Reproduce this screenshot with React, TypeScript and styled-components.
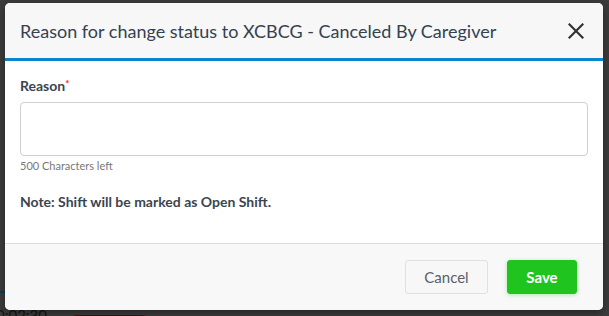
import React from 'react';
import styled, { createGlobalStyle } from 'styled-components';

const GlobalStyle = createGlobalStyle`
  html, body {
    margin: 0;
    padding: 0;
    background: #3c3c3c;
    font-family: Lato, "Open Sans", Arial, sans-serif;
    overflow: hidden;
  }
  * { box-sizing: border-box; }
`;

const Page = styled.div`
  position: relative;
  width: 609px;
  height: 316px;
  background: #3c3c3c;
  overflow: hidden;
`;

const BackRow = styled.div`
  position: absolute;
  left: -4px;
  top: 306px;
  right: 0;
  display: grid;
  grid-template-columns: 72px 88px 112px 137px 115px 1fr;
  align-items: center;
  font-size: 15px;
  color: #141414;
`;

const BackBadge = styled.span`
  display: inline-block;
  background: #520d0d;
  color: #7a2a2a;
  border-radius: 10px;
  padding: 1px 10px;
  font-size: 14px;
`;

const BackRule = styled.div`
  position: absolute;
  left: 0;
  top: 291px;
  width: 6px;
  height: 2px;
  background: #0b3b5c;
`;

const Modal = styled.div`
  position: absolute;
  top: 3px;
  left: 5px;
  width: 598px;
  height: 307px;
  background: #fff;
  border-radius: 5px;
  overflow: hidden;
  display: flex;
  flex-direction: column;
  box-shadow: 0 3px 9px rgba(0, 0, 0, 0.4);
`;

const Header = styled.div`
  height: 58px;
  background: #f7f7f7;
  border-bottom: 3px solid #0a84d0;
  display: flex;
  align-items: center;
  justify-content: space-between;
  padding: 0 17px 0 15px;
`;

const Title = styled.h4`
  margin: 0;
  font-size: 18px;
  font-weight: 400;
  color: #364150;
`;

const CloseButton = styled.button`
  border: none;
  background: transparent;
  padding: 0;
  width: 20px;
  height: 20px;
  display: flex;
  align-items: center;
  justify-content: center;
  cursor: pointer;
`;

const Body = styled.div`
  flex: 1;
  padding: 16px 15px 0 15px;
`;

const Label = styled.label`
  display: block;
  font-size: 14px;
  font-weight: 700;
  color: #3a4551;
  margin-bottom: 8px;
`;

const Required = styled.span`
  color: #e8262b;
  font-size: 10px;
  vertical-align: top;
`;

const TextArea = styled.textarea`
  display: block;
  width: 568px;
  height: 54px;
  margin-top: 1px;
  border: 1px solid #cfcfcf;
  border-radius: 4px;
  resize: none;
  font-family: inherit;
  font-size: 14px;
  outline: none;
`;

const Hint = styled.div`
  font-size: 11px;
  color: #777;
  margin-top: 3px;
`;

const Note = styled.p`
  margin: 21px 0 0;
  font-size: 14px;
  font-weight: 700;
  color: #3a4551;
`;

const Footer = styled.div`
  height: 67px;
  background: #f8f8f8;
  border-top: 1px solid #ddd;
  display: flex;
  align-items: center;
  justify-content: flex-end;
  gap: 19px;
  padding: 0 26px 0 0;
`;

const Button = styled.button<{ $primary?: boolean }>`
  height: 34px;
  width: ${p => (p.$primary ? '70px' : '83px')};
  padding: 0;
  border-radius: 3px;
  font-family: inherit;
  font-size: 15px;
  font-weight: ${p => (p.$primary ? 700 : 400)};
  color: ${p => (p.$primary ? '#fff' : '#5a5f66')};
  background: ${p => (p.$primary ? '#1fc41f' : '#f7f7f7')};
  border: 1px solid ${p => (p.$primary ? '#1fc41f' : '#e0e0e0')};
  box-shadow: ${p => (p.$primary ? '0 1px 4px rgba(31, 196, 31, 0.35)' : 'none')};
  cursor: pointer;
`;

export default function App() {
  return (
    <Page>
      <GlobalStyle />
      <BackRule />
      <BackRow>
        <span>0:02:30 AM</span>
        <span><BackBadge>Clock-Out</BackBadge></span>
        <span>Rochester Office</span>
        <span>0.50hrs</span>
        <span>0.50hrs</span>
        <span>0.00</span>
      </BackRow>
      <Modal>
        <Header>
          <Title>Reason for change status to XCBCG - Canceled By Caregiver</Title>
          <CloseButton aria-label="Close">
            <svg width="16" height="16" viewBox="0 0 16 16">
              <path d="M1.5 1.5 L14.5 14.5 M14.5 1.5 L1.5 14.5" stroke="#333" strokeWidth="2.2" strokeLinecap="square" />
            </svg>
          </CloseButton>
        </Header>
        <Body>
          <Label>
            Reason<Required>*</Required>
          </Label>
          <TextArea />
          <Hint>500 Characters left</Hint>
          <Note>Note: Shift will be marked as Open Shift.</Note>
        </Body>
        <Footer>
          <Button>Cancel</Button>
          <Button $primary>Save</Button>
        </Footer>
      </Modal>
    </Page>
  );
}
